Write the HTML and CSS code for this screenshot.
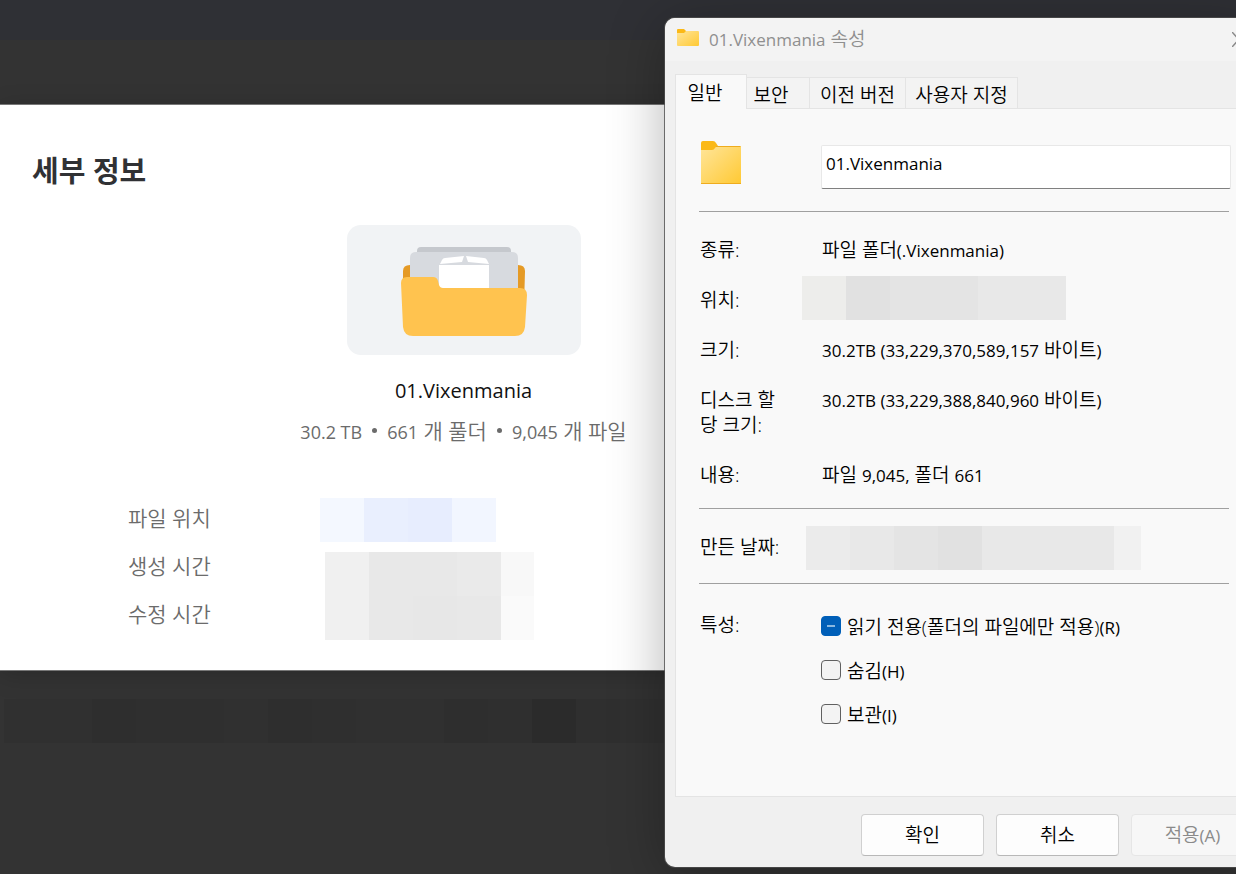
FILE: index.html
```html
<!DOCTYPE html>
<html lang="ko">
<head>
  <meta charset="UTF-8">
  <meta name="viewport" content="width=device-width, initial-scale=1.0">
  <title>01.Vixenmania 속성</title>
  <link rel="stylesheet" href="styles.css">
</head>
<body>
  <div class="desktop">
    <div class="app-bar"></div>

    <main class="details">
      <h1>세부 정보</h1>

      <div class="preview">
        <svg width="126" height="90" viewBox="0 0 126 90" aria-hidden="true">
          <path d="M16 5V4a4 4 0 0 1 4-4h86a4 4 0 0 1 4 4v1z" fill="#c5c8cd"/>
          <path d="M2 60V24q0-6 7-6h108q7 0 7 6l-1 36z" fill="#e59a25"/>
          <path d="M9 60V11q0-6 6-6h96q6 0 6 6v49z" fill="#d7dadf"/>
          <path d="M39 17l2-4q1-2 3-2l19-2-2 6zM88 17l-2-4q-1-2-3-2l-18-2 2 6z" fill="#fff"/>
          <path d="M38 18h50v40H38z" fill="#fff"/>
          <path d="M0 36q0-6 6-6h26q4 0 5 4l1 4q1 3 4 3h77q7 0 7 7l-2 32q-1 9-10 9H12q-9 0-10-9z" fill="#ffc34f"/>
        </svg>
      </div>

      <p class="name">01.Vixenmania</p>
      <p class="summary"><span class="num">30.2 TB</span><i class="dot"></i><span class="num">661</span> 개 풀더<i class="dot"></i><span class="num">9,045</span> 개 파일</p>

      <dl class="info">
        <div class="info-row">
          <dt>파일 위치</dt>
          <dd class="mosaic location"><i class="b1"></i><i class="b2"></i><i class="b3"></i><i class="b4"></i></dd>
        </div>
        <div class="info-row">
          <dt>생성 시간</dt>
          <dd class="mosaic created"><i class="g2"></i><i class="g4"></i><i class="g4"></i><i class="g3"></i><i class="g0 end"></i></dd>
        </div>
        <div class="info-row">
          <dt>수정 시간</dt>
          <dd class="mosaic modified"><i class="g2"></i><i class="g4"></i><i class="g5"></i><i class="g4"></i><i class="g1 end"></i></dd>
        </div>
      </dl>
    </main>

    <div class="mosaic dark">
      <i></i><i></i><i class="d2"></i><i class="d1"></i><i class="d1"></i><i></i><i class="d2"></i><i class="d1"></i><i></i><i></i><i class="d2"></i><i class="d1"></i><i class="d3"></i><i class="d1"></i><i></i>
    </div>

    <section class="dialog" aria-label="01.Vixenmania 속성">
      <header class="title-bar">
        <svg class="title-icon" width="22" height="18" viewBox="0 0 22 18" aria-hidden="true">
          <defs>
            <linearGradient id="folder" x1="0" y1="0" x2="1" y2="1">
              <stop offset="0" stop-color="#ffe59a"/>
              <stop offset="1" stop-color="#ffc933"/>
            </linearGradient>
          </defs>
          <path d="M0 5V1q0-1 1-1h6l2 2v3z" fill="#fbb917"/>
          <path d="M0 4h7l2-2h12q1 0 1 1v13q0 1-1 1H1q-1 0-1-1z" fill="url(#folder)"/>
        </svg>
        <span class="title"><span class="num">01.Vixenmania</span> 속성</span>
        <button class="close" aria-label="닫기">
          <svg width="14" height="15" viewBox="0 0 14 15"><path d="M0 0l14 15M14 0L0 15" stroke="#8a8a8a" stroke-width="1.500"/></svg>
        </button>
      </header>

      <nav class="tabs">
        <button class="tab active">일반</button>
        <button class="tab security">보안</button>
        <button class="tab versions">이전 버전</button>
        <button class="tab custom">사용자 지정</button>
      </nav>

      <div class="panel">
        <div class="row file">
          <svg width="40" height="44" viewBox="0 0 40 44" aria-hidden="true">
            <path d="M0 12V2q0-2 2-2h10q2 0 3 2l2 3h-2v7z" fill="#fbb917"/>
            <path d="M0 9h11q2 0 3-2t3-2h22q1 0 1 1v36q0 1-1 1H1q-1 0-1-1z" fill="url(#folder)"/>
            <path d="M15 5.500h24.500M0 42.500h40" stroke="#efac1e" fill="none"/>
          </svg>
          <input class="file-name" type="text" value="01.Vixenmania" aria-label="이름">
        </div>
        <hr>
        <div class="rows">
          <div class="row"><span>종류:</span><span>파일 폴더<span class="num">(.Vixenmania)</span></span></div>
          <div class="row"><span>위치:</span><span class="mosaic path"><i class="p1"></i><i class="p5"></i><i class="p4"></i><i class="p4"></i><i class="p3"></i><i class="p3"></i></span></div>
          <div class="row"><span>크기:</span><span><span class="num">30.2TB (33,229,370,589,157</span> 바이트<span class="num">)</span></span></div>
          <div class="row"><span>디스크 할<br>당 크기:</span><span><span class="num">30.2TB (33,229,388,840,960</span> 바이트<span class="num">)</span></span></div>
          <div class="row"><span>내용:</span><span>파일 <span class="num">9,045,</span> 폴더 <span class="num">661</span></span></div>
        </div>
        <hr>
        <div class="row date"><span>만든 날짜:</span><span class="mosaic date-value"><i class="p2"></i><i class="p3"></i><i class="p4"></i><i class="p5"></i><i class="p3"></i><i class="p3"></i><i class="p3"></i><i class="p0 end"></i></span></div>
        <hr>
        <div class="row attributes">
          <span>특성:</span>
          <div class="checks">
            <label><input type="checkbox" class="mixed"><span>읽기 전용(폴더의 파일에만 적용)<span class="num">(R)</span></span></label>
            <label><input type="checkbox"><span>숨김<span class="num">(H)</span></span></label>
            <label><input type="checkbox"><span>보관<span class="num">(I)</span></span></label>
          </div>
        </div>
      </div>

      <footer class="actions">
        <button>확인</button>
        <button>취소</button>
        <button disabled>적용<span class="num">(A)</span></button>
      </footer>
    </section>
  </div>
</body>
</html>
```

FILE: styles.css
```css
* {
  box-sizing: border-box;
  margin: 0;
  padding: 0;
}

body {
  background: #333333;
  font-family: "Open Sans", "Noto Sans CJK KR", sans-serif;
  overflow: hidden;
}

button, input {
  font: inherit;
  color: inherit;
}

.desktop {
  position: relative;
  min-height: 100vh;
}

.app-bar {
  height: 40px;
  background: #2f3035;
}

/* details sheet */
.details {
  width: 75%;
  margin-top: 65px;
  padding: 44px 0 32px;
  background: #ffffff;
  box-shadow: 0 0 0 1px #777777, 0 4px 24px rgba(0, 0, 0, 0.2);
  color: #6b6b6b;
  font-size: 21px;
  font-weight: 350;
  line-height: 32px;
}

.details h1 {
  padding-left: 32px;
  margin-bottom: 32px;
  color: #303134;
  font-size: 29px;
  font-weight: 700;
  line-height: 44px;
}

.preview {
  display: flex;
  align-items: center;
  justify-content: center;
  width: 234px;
  height: 130px;
  margin: 0 auto 20px;
  padding-top: 4px;
  background: #f1f3f5;
  border-radius: 14px;
}

.details p {
  text-align: center;
}

.details .name {
  margin-bottom: 8px;
  color: #111111;
  font-size: 20px;
  font-weight: 400;
}

.details .num {
  font-size: 18px;
  font-weight: 400;
}

.dot {
  display: inline-block;
  width: 5px;
  height: 5px;
  margin: 0 10px;
  border-radius: 50%;
  background: #6b6b6b;
  vertical-align: 6px;
}

.info {
  margin-top: 46px;
  padding-left: 128px;
}

.info-row {
  display: flex;
  align-items: center;
  height: 48px;
}

.info dt {
  width: 192px;
}

/* censored blocks */
.mosaic {
  display: flex;
}

.mosaic i {
  width: 44px;
  height: 44px;
}

.mosaic .end {
  width: 33px;
}

.location {
  margin-top: 4px;
}

.created, .modified {
  margin-left: 5px;
}

.created {
  align-self: flex-end;
  margin-bottom: -6px;
}

.modified {
  align-self: flex-start;
  margin-top: 6px;
}

.b1 { background: #f4f8ff; }
.b2 { background: #e9effe; }
.b3 { background: #e7edfe; }
.b4 { background: #f2f6ff; }
.g0 { background: #f8f8f8; }
.g1 { background: #fafafa; }
.g2 { background: #f0f0f0; }
.g3 { background: #eaeaea; }
.g4 { background: #e8e8e8; }
.g5 { background: #e7e7e7; }
.p0 { background: #f1f1f1; }
.p1 { background: #ededeb; }
.p2 { background: #ebebeb; }
.p3 { background: #e8e8e8; }
.p4 { background: #e4e4e4; }
.p5 { background: #e1e1e1; }

.dark {
  margin: 29px 0 0 4px;
}

.dark i { background: #303030; }
.dark .d1 { background: #2f2f2f; }
.dark .d2 { background: #2e2e2e; }
.dark .d3 { background: #2b2b2b; }

/* properties window */
.dialog {
  position: absolute;
  top: 18px;
  left: 665px;
  width: 592px;
  background: #f0f0f0;
  border-radius: 10px;
  box-shadow: 0 0 0 1px rgba(78, 78, 78, 0.8), 0 8px 56px rgba(0, 0, 0, 0.3);
  color: #000000;
  font-size: 19px;
  font-weight: 350;
  line-height: 25px;
}

.dialog .num {
  font-size: 17px;
  font-weight: 400;
}

.title-bar {
  display: flex;
  align-items: center;
  height: 43px;
  padding: 0 11px 0 12px;
  background: #f3f3f3;
  border-radius: 10px 10px 0 0;
  color: #8f8f8f;
}

.title-icon {
  margin-bottom: 4px;
}

.title {
  margin-left: 10px;
}

.close {
  margin-left: auto;
  border: 0;
  background: none;
}

.close svg {
  display: block;
}

.tabs {
  display: flex;
  align-items: flex-end;
  margin: 13px 0 0 10px;
}

.tab {
  height: 31px;
  padding-top: 4px;
  border: 1px solid #e4e4e4;
  border-width: 1px 1px 0 0;
  background: #f3f3f3;
}

.tab.active {
  height: 35px;
  width: 72px;
  margin-bottom: -1px;
  padding: 2px 12px 0 0;
  border-width: 1px 1px 0 1px;
  background: #f9f9f9;
  z-index: 1;
}

.tab.security {
  width: 63px;
  padding-right: 14px;
}

.tab.versions {
  width: 96px;
}

.tab.custom {
  width: 112px;
}

.panel {
  height: 689px;
  margin-left: 10px;
  padding: 32px 27px 0 23px;
  background: #f9f9f9;
  border: 1px solid #e4e4e4;
}

.panel hr {
  border: 0;
  border-top: 1px solid #a0a0a0;
}

.row {
  display: grid;
  grid-template-columns: 122px 1fr;
  padding-left: 1px;
}

.file {
  padding-left: 2px;
  margin-bottom: 22px;
}

.file-name {
  height: 44px;
  margin: 4px -2px 0 -2px;
  padding: 0 4px 8px;
  border: 1px solid #e8e8e8;
  border-bottom-color: #808080;
  border-radius: 2px;
  background: #ffffff;
  font-size: 17px;
  font-weight: 400;
}

.rows {
  display: flex;
  flex-direction: column;
  gap: 25px;
  padding: 26px 0 20px;
}

.path {
  margin: -12px 0 -7px -20px;
}

.date {
  padding: 26px 0 23px 1px;
}

.date-value {
  margin: -9px 0 -10px -16px;
}

.date-value .end {
  width: 27px;
}

.attributes {
  padding-top: 29px;
}

.checks {
  display: flex;
  flex-direction: column;
  gap: 18px;
}

.checks label {
  display: flex;
  align-items: center;
  height: 26px;
  margin-left: -1px;
}

.checks span {
  padding-top: 2px;
}

.checks input {
  appearance: none;
  width: 20px;
  height: 20px;
  margin-right: 6px;
  border: 1px solid #606060;
  border-radius: 4px;
  background: #f3f3f3;
}

.checks .mixed {
  border-color: #005fb8;
  background: linear-gradient(#8ab8e0, #8ab8e0) center / 8px 2px no-repeat #005fb8;
}

.actions {
  display: flex;
  justify-content: flex-end;
  gap: 12px;
  padding: 17px 3px 11px;
}

.actions button {
  width: 123px;
  height: 42px;
  border: 1px solid #d0d0d0;
  border-bottom-color: #b8b8b8;
  border-radius: 4px;
  background: #fdfdfd;
}

.actions button:disabled {
  border-color: #e6e6e6;
  background: #f7f7f7;
  color: #8a8a8a;
}
```
